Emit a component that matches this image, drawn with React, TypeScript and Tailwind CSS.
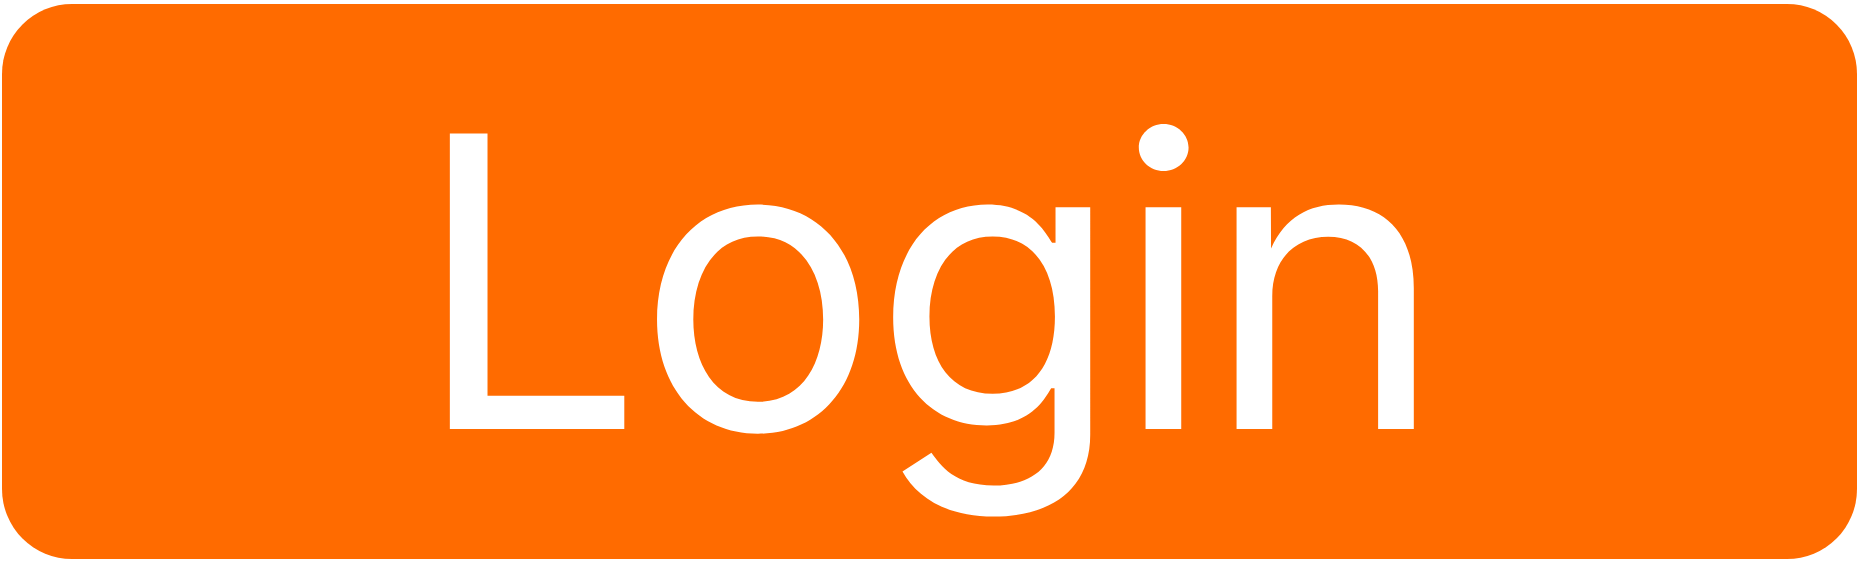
export default function App() {
  return (
    <div className="h-[566px] w-[1861px] bg-white pl-[2px] pt-[4px]">
      <button className="flex h-[555px] w-[1855px] items-center justify-center rounded-[70px] bg-[#ff6b00] pr-[7px] font-['Inter',sans-serif] text-[406px] font-normal leading-none tracking-[-0.018em] text-white">
        Login
      </button>
    </div>
  )
}
